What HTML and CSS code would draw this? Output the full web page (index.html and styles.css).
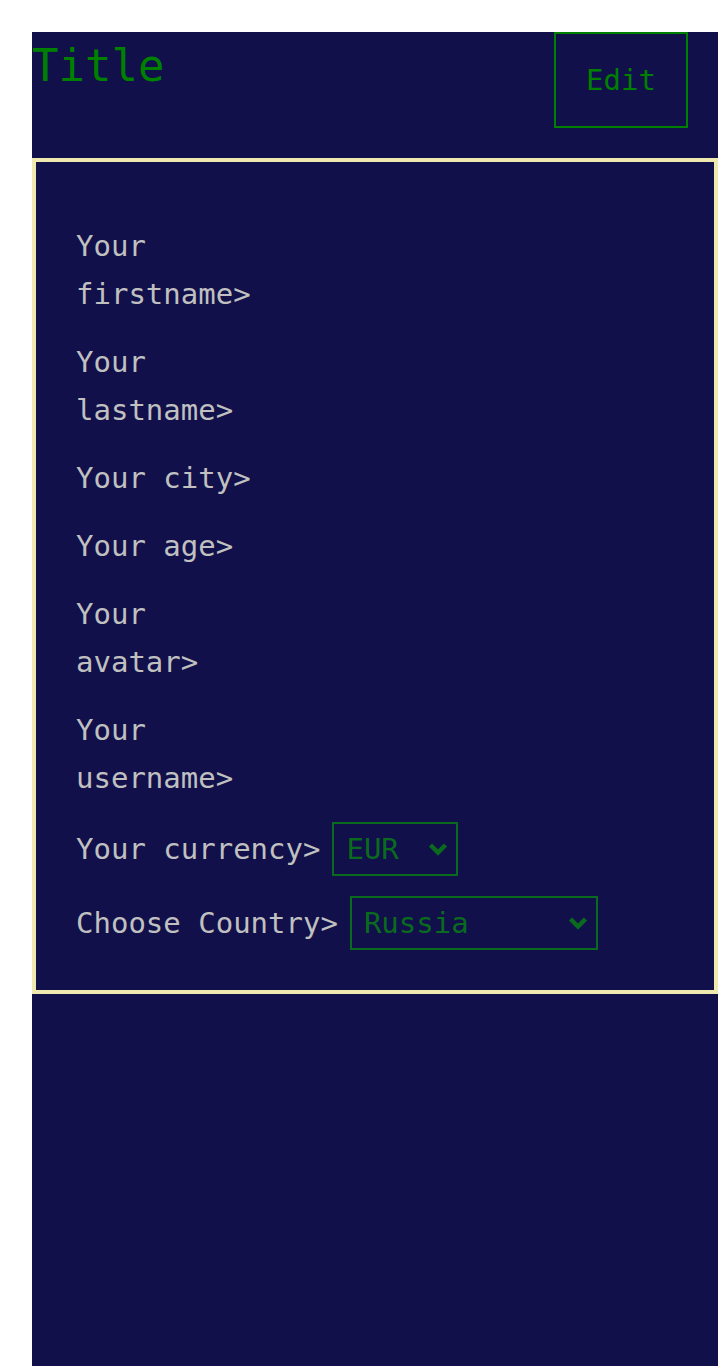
FILE: index.html
```html
<!DOCTYPE html>
<html>
<head>
<meta charset="utf-8">
<link rel="stylesheet" href="styles.css">
</head>
<body>
<div class="app">
  <header class="header">
    <h1 class="title">Title</h1>
    <button class="edit-btn">Edit</button>
  </header>
  <form class="profile">
    <div class="row"><span class="label narrow">Your firstname&gt;</span></div>
    <div class="row"><span class="label narrow">Your lastname&gt;</span></div>
    <div class="row"><span class="label narrow">Your city&gt;</span></div>
    <div class="row"><span class="label narrow">Your age&gt;</span></div>
    <div class="row"><span class="label narrow">Your avatar&gt;</span></div>
    <div class="row"><span class="label narrow">Your username&gt;</span></div>
    <div class="row select-row">
      <span class="label">Your currency&gt;</span>
      <span class="select-wrap">
        <select class="select currency"><option>EUR</option></select>
        <svg class="chevron" width="20" height="14" viewBox="0 0 20 14"><path d="M2.5 3 L10 10.5 L17.5 3" fill="none" stroke="currentColor" stroke-width="4.5"/></svg>
      </span>
    </div>
    <div class="row select-row">
      <span class="label">Choose Country&gt;</span>
      <span class="select-wrap">
        <select class="select country"><option>Russia</option></select>
        <svg class="chevron" width="20" height="14" viewBox="0 0 20 14"><path d="M2.5 3 L10 10.5 L17.5 3" fill="none" stroke="currentColor" stroke-width="4.5"/></svg>
      </span>
    </div>
  </form>
</div>
</body>
</html>
```
FILE: styles.css
```css
html, body {
  margin: 0;
  padding: 0;
  background: #ffffff;
}
body {
  font-family: "DejaVu Sans Mono", monospace;
}
.app {
  margin: 32px 0 0 32px;
  background: #11104a;
  min-height: 1334px;
}
.header {
  display: flex;
  justify-content: space-between;
  align-items: flex-start;
  height: 126px;
}
.title {
  margin: 8px 0 0 0;
  font-size: 44px;
  font-weight: normal;
  color: #008000;
  line-height: 52px;
}
.edit-btn {
  width: 134px;
  height: 96px;
  margin-right: 30px;
  background: transparent;
  border: 2px solid #008000;
  color: #008000;
  font-family: "DejaVu Sans Mono", monospace;
  font-size: 29px;
  padding: 0;
}
.profile {
  border: 4px solid #eeeaaf;
  padding: 40px;
  display: flex;
  flex-direction: column;
  gap: 20px;
  padding-top: 60px;
}
.row {
  display: flex;
  align-items: center;
  color: #c0c0c0;
  font-size: 29px;
  line-height: 48px;
}
.label.narrow {
  width: 190px;
}
.select-row {
  gap: 12px;
}
.select-wrap {
  position: relative;
  display: inline-flex;
  color: #0a6a1e;
}
.select {
  appearance: none;
  -webkit-appearance: none;
  background: transparent;
  border: 2px solid #0a6a1e;
  border-radius: 0;
  color: #0a6a1e;
  font-family: "DejaVu Sans Mono", monospace;
  font-size: 29px;
  height: 54px;
  padding: 0 0 0 12px;
  margin: 0;
}
.select.currency {
  width: 126px;
}
.select.country {
  width: 248px;
}
.chevron {
  position: absolute;
  right: 10px;
  top: 20px;
  pointer-events: none;
}
```
